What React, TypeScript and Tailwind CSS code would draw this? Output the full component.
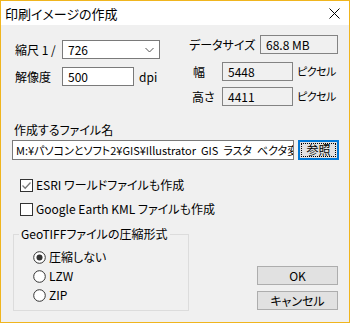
const jp = "font-['Noto_Sans_CJK_JP','Noto_Sans',sans-serif] [font-feature-settings:'palt']";

const ReadBox = ({ value, w }: { value: string; w: string }) => (
  <div className={`${w} flex h-[19px] shrink-0 items-center border border-[#838383] bg-[#f0f0f0] pl-[5px] text-[12px] leading-none text-black`}>
    {value}
  </div>
);

const Check = ({ checked }: { checked?: boolean }) => (
  <span className="flex h-[13px] w-[13px] shrink-0 items-center justify-center border border-[#333] bg-white">
    {checked && (
      <svg width="11" height="11" viewBox="0 0 11 11">
        <path d="M1.5 5.5 L4.2 8.2 L9.5 2.5" fill="none" stroke="#7a7a7a" strokeWidth="1.3" />
      </svg>
    )}
  </span>
);

const Radio = ({ checked }: { checked?: boolean }) => (
  <svg width="13" height="13" viewBox="0 0 13 13" className="shrink-0">
    <circle cx="6.5" cy="6.5" r="5.8" fill="#fff" stroke="#333" strokeWidth="1" />
    {checked && <circle cx="6.5" cy="6.5" r="3" fill="#333" />}
  </svg>
);

export default function App() {
  return (
    <div className={`${jp} flex h-[323px] w-[350px] flex-col overflow-hidden border border-[#f0b51e] bg-[#f0f0f0] text-[12px] text-black`}>
      {/* title bar */}
      <div className="flex h-[24px] shrink-0 items-center justify-between bg-white pl-[4px] pr-[9px]">
        <span className="text-[13px] leading-none">印刷イメージの作成</span>
        <svg width="11" height="11" viewBox="0 0 11 11">
          <path d="M0.5 0.5 L10.5 10.5 M10.5 0.5 L0.5 10.5" stroke="#000" strokeWidth="1" />
        </svg>
      </div>

      <div className="flex flex-1 flex-col pl-[14px] pr-[11px]">
        {/* top section */}
        <div className="flex justify-between">
          <div className="flex flex-col pt-[15px]">
            <div className="flex h-[19px] items-center">
              <span className="w-[47px] shrink-0">縮尺 1 /</span>
              <div className="flex h-[19px] w-[98px] items-center justify-between border border-[#7a7a7a] bg-white pl-[5px] pr-[5px]">
                <span>726</span>
                <svg width="9" height="6" viewBox="0 0 9 6">
                  <path d="M0.5 1 L4.5 5 L8.5 1" fill="none" stroke="#555" strokeWidth="1" />
                </svg>
              </div>
            </div>
            <div className="mt-[8px] flex h-[19px] items-center">
              <span className="w-[47px] shrink-0">解像度</span>
              <div className="flex h-[19px] w-[72px] items-center border border-[#7a7a7a] bg-white pl-[5px]">500</div>
              <span className="ml-[5px]">dpi</span>
            </div>
          </div>

          <div className="flex w-[149px] shrink-0 flex-col pt-[10px]">
            <div className="flex h-[19px] items-center">
              <span className="w-[71px] shrink-0 whitespace-nowrap">データサイズ</span>
              <ReadBox value="68.8 MB" w="w-[78px]" />
            </div>
            <div className="mt-[8px] flex h-[19px] items-center whitespace-nowrap">
              <span className="w-[33px] shrink-0 pl-[4px]">幅</span>
              <ReadBox value="5448" w="w-[71px]" />
              <span className="ml-[4px] text-[11px] tracking-[-0.5px]">ピクセル</span>
            </div>
            <div className="mt-[6px] flex h-[19px] items-center whitespace-nowrap">
              <span className="w-[33px] shrink-0 pl-[3px]">高さ</span>
              <ReadBox value="4411" w="w-[71px]" />
              <span className="ml-[4px] text-[11px] tracking-[-0.5px]">ピクセル</span>
            </div>
          </div>
        </div>

        {/* file name */}
        <div className="-ml-[1px] mt-[15px] h-[17px] leading-[17px]">作成するファイル名</div>
        <div className="-ml-[3px] mt-[2px] flex items-center gap-[4px]">
          <div className="flex h-[20px] w-[282px] shrink-0 items-center overflow-hidden whitespace-nowrap border border-[#7a7a7a] bg-white pl-[3px] text-[11px]">
            <span className="truncate [text-overflow:clip]">M:¥パソコンとソフト2¥GIS¥Illustrator&nbsp; GIS&nbsp; ラスタ&nbsp; ベクタ変換</span>
          </div>
          <button className="flex h-[20px] w-[41px] shrink-0 items-center justify-center border-2 border-[#0078d7] bg-[#e1e1e1] p-[1px]">
            <span className="flex h-full w-full items-center justify-center border border-dotted border-black leading-none">参照</span>
          </button>
        </div>

        {/* checkboxes */}
        <div className="ml-[5px] mt-[17px] flex h-[16px] items-center gap-[3px]">
          <Check checked />
          <span>ESRI ワールドファイルも作成</span>
        </div>
        <div className="ml-[5px] mt-[8px] flex h-[16px] items-center gap-[3px]">
          <Check />
          <span>Google Earth KML ファイルも作成</span>
        </div>

        {/* bottom */}
        <div className="mt-[17px] flex items-end justify-between">
          <div className="relative -ml-[2px] h-[77px] w-[176px] border border-[#dcdcdc]">
            <span className="absolute -top-[9px] left-[5px] bg-[#f0f0f0] px-[2px] leading-[16px]">GeoTIFFファイルの圧縮形式</span>
            <div className="flex flex-col pl-[19px] pt-[14px]">
              <div className="flex h-[16px] items-center gap-[3px]">
                <Radio checked />
                <span>圧縮しない</span>
              </div>
              <div className="mt-[3px] flex h-[16px] items-center gap-[3px]">
                <Radio />
                <span>LZW</span>
              </div>
              <div className="mt-[3px] flex h-[16px] items-center gap-[3px]">
                <Radio />
                <span>ZIP</span>
              </div>
            </div>
          </div>
          <div className="mb-[1px] flex flex-col gap-[6px]">
            <button className="flex h-[19px] w-[81px] items-center justify-center border border-[#adadad] bg-[#e1e1e1] leading-none">OK</button>
            <button className="flex h-[19px] w-[81px] items-center justify-center border border-[#adadad] bg-[#e1e1e1] leading-none">キャンセル</button>
          </div>
        </div>
      </div>
    </div>
  );
}
